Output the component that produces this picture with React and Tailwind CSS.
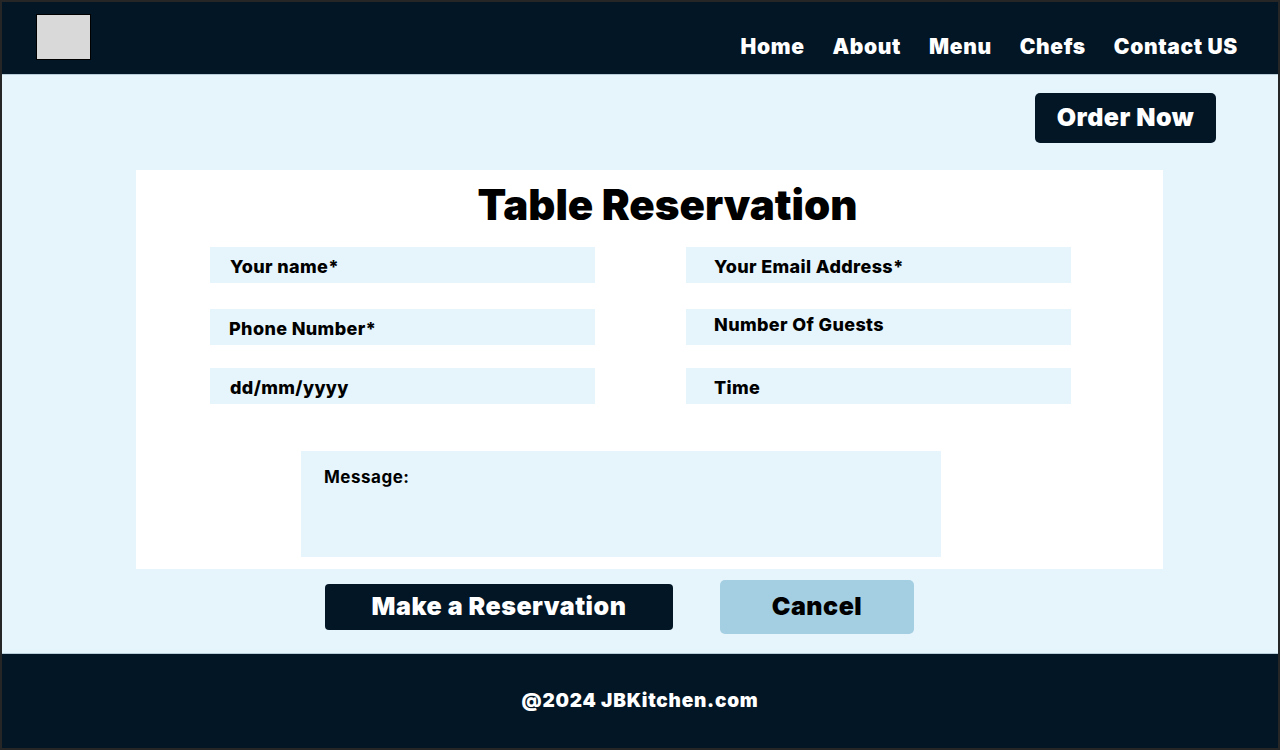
const navLinks = ['Home', 'About', 'Menu', 'Chefs', 'Contact US'];

const Field = ({ label, pad = 'pl-5', top = 'pt-[3px]' }) => (
  <div className={`flex h-9 items-center bg-[#e6f5fc] ${pad} ${top} text-[18px] font-extrabold tracking-[0.02em] text-black`}>
    {label}
  </div>
);

const App = () => {
  return (
    <div
      className="flex h-[750px] w-[1280px] flex-col overflow-hidden border-2 border-[#262626] bg-[#e6f5fc]"
      style={{ fontFamily: 'Inter, "Noto Sans", sans-serif' }}
    >
      <header className="flex h-[72px] shrink-0 items-start justify-between bg-[#021626] pl-[34px] pr-10">
        <div className="mt-3 h-[46px] w-[55px] border border-black bg-[#d9d9d9]" />
        <nav className="mt-[34px] flex gap-[28px] text-[21px] font-black tracking-[0.03em] text-white">
          {navLinks.map((link) => (
            <a key={link} href="#" className="leading-none">
              {link}
            </a>
          ))}
        </nav>
      </header>

      <main className="flex flex-1 flex-col border-t border-[#b9cdd8]">
        <div className="flex justify-end pr-[62px] pt-[18px]">
          <button
            type="button"
            className="h-[50px] w-[181px] rounded-[5px] bg-[#021626] text-[25px] font-black tracking-[0.02em] text-white"
          >
            Order Now
          </button>
        </div>

        <section className="ml-[134px] mt-[27px] h-[399px] w-[1027px] bg-white pt-[12px]">
          <h1 className="pl-[36px] text-center text-[42px] font-black leading-[46px] tracking-normal text-black">
            Table Reservation
          </h1>
          <div className="ml-[74px] mt-[19px] grid grid-cols-[385px_385px] gap-x-[91px]">
            <div className="flex flex-col">
              <Field label="Your name*" />
              <div className="h-[26px]" />
              <Field label="Phone Number*" pad="pl-[19px]" />
              <div className="h-[23px]" />
              <Field label="dd/mm/yyyy" />
            </div>
            <div className="flex flex-col">
              <Field label="Your Email Address*" pad="pl-[28px]" />
              <div className="h-[26px]" />
              <Field label="Number Of Guests" pad="pl-[28px]" top="pb-[5px]" />
              <div className="h-[23px]" />
              <Field label="Time" pad="pl-[28px]" />
            </div>
          </div>
          <div className="ml-[165px] mt-[47px] h-[106px] w-[640px] bg-[#e6f5fc] px-[23px] pt-[14px] text-[17px] font-bold tracking-[0.03em] text-black">
            Message:
          </div>
        </section>

        <div className="flex items-center gap-[47px] pl-[323px] pt-[11px]">
          <button
            type="button"
            className="h-[46px] w-[348px] rounded-[4px] bg-[#021626] text-[25px] font-black tracking-[0.02em] text-white"
          >
            Make a Reservation
          </button>
          <button
            type="button"
            className="h-[54px] w-[194px] rounded-[5px] bg-[#a4cfe3] text-[25px] font-black tracking-[0.02em] text-black"
          >
            Cancel
          </button>
        </div>
      </main>

      <footer className="flex h-[95px] shrink-0 items-center justify-center border-t border-[#b9cdd8] bg-[#021626] text-[19px] font-black tracking-[0.04em] text-white">
        @2024 JBKitchen.com
      </footer>
    </div>
  );
};

export default App;
